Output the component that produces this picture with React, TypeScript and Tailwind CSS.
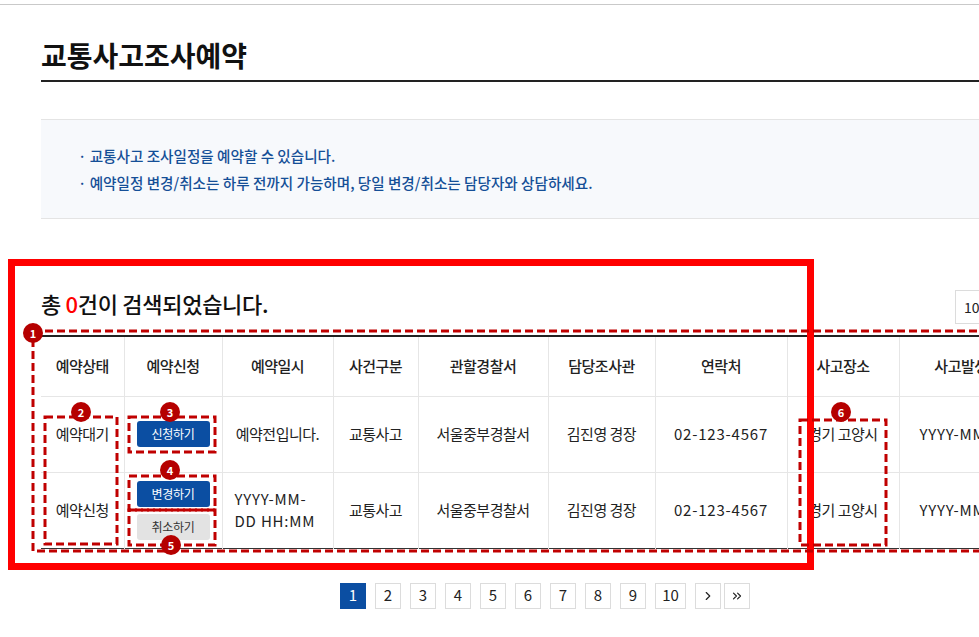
import { ChevronRight, ChevronsRight } from 'lucide-react';

const COLS = [83, 98, 111, 85, 130, 107, 132, 112, 150];
const HEADERS = ['예약상태', '예약신청', '예약일시', '사건구분', '관할경찰서', '담당조사관', '연락처', '사고장소', '사고발생일시'];

function Badge({ n, x, y }: { n: number; x: number; y: number }) {
  return (
    <div
      className="absolute w-[20px] h-[20px] rounded-full bg-[#b50000] text-white text-[11px] font-bold leading-[20px] text-center"
      style={{ left: x - 10, top: y - 10 }}
    >
      {n}
    </div>
  );
}

function DashBox({ x, y, w, h }: { x: number; y: number; w: number; h: number }) {
  return (
    <svg className="absolute pointer-events-none" style={{ left: x - 2, top: y - 2 }} width={w + 4} height={h + 4}>
      <rect x={2} y={2} width={w} height={h} fill="none" stroke="#c00000" strokeWidth={3} strokeDasharray="8 4" />
    </svg>
  );
}

function Btn({ children, gray }: { children: React.ReactNode; gray?: boolean }) {
  return (
    <button
      className={`w-[73px] h-[26px] rounded-[3px] text-[12px] tracking-[-0.3px] leading-[26px] ${
        gray ? 'bg-[#e3e3e3] text-[#333]' : 'bg-[#0b4ea2] text-white'
      }`}
    >
      {children}
    </button>
  );
}

export default function App() {
  const td = 'border-l border-[#e6e6e6] first:border-l-0 text-center text-[15px] tracking-[-0.5px] text-[#222] px-[12px]';
  const num = 'tracking-[0.8px]';
  return (
    <div className="relative w-[979px] h-[637px] overflow-hidden bg-white font-['Noto_Sans_CJK_KR','Noto_Sans',sans-serif]">
      <div className="h-[4px]" />
      <div className="h-px bg-[#c9c9c9]" />

      <div className="pl-[41px]">
        <div className="w-[1008px]">
          <h1 className="pt-[30px] pb-[5px] text-[28px] leading-[40px] font-bold text-[#111] border-b-2 border-[#222]">
            교통사고조사예약
          </h1>

          {/* 안내 */}
          <div className="mt-[37px] bg-[#f7f9fc] border-y border-[#e4e4e4] pl-[37px] py-[22px] text-[14.6px] leading-[27px] text-[#154f97] font-medium">
            <p>· 교통사고 조사일정을 예약할 수 있습니다.</p>
            <p>· 예약일정 변경/취소는 하루 전까지 가능하며, 당일 변경/취소는 담당자와 상담하세요.</p>
          </div>

          <div className="mt-[71px] flex items-start justify-between">
            <p className="text-[22px] leading-[26px] tracking-[-0.3px] text-[#111] font-medium">
              총 <span className="text-[#ff0000]">0</span>건이 검색되었습니다.
            </p>
            <div className="w-[94px] h-[34px] border border-[#dcdcdc] text-[14px] leading-[32px] pl-[8px] text-[#222]">10</div>
          </div>

          <table className="mt-[11px] table-fixed border-collapse w-[1008px] border-t-2 border-t-[#222] border-b border-b-[#333]">
            <colgroup>
              {COLS.map((w, i) => (
                <col key={i} style={{ width: w }} />
              ))}
            </colgroup>
            <thead>
              <tr className="h-[60px] border-b border-[#e6e6e6]">
                {HEADERS.map(h => (
                  <th key={h} className={`${td} font-medium whitespace-nowrap`}>
                    {h}
                  </th>
                ))}
              </tr>
            </thead>
            <tbody>
              <tr className="h-[76px] border-b border-[#e6e6e6]">
                <td className={td}>예약대기</td>
                <td className={td}>
                  <Btn>신청하기</Btn>
                </td>
                <td className={td}>예약전입니다.</td>
                <td className={td}>교통사고</td>
                <td className={td}>서울중부경찰서</td>
                <td className={td}>김진영 경장</td>
                <td className={`${td} ${num}`}>02-123-4567</td>
                <td className={td}>경기 고양시</td>
                <td className={`${td} ${num} text-left !pl-[20px] whitespace-nowrap`}>YYYY-MM-DD</td>
              </tr>
              <tr className="h-[76px]">
                <td className={td}>예약신청</td>
                <td className={td}>
                  <div className="flex flex-col items-center gap-[7px]">
                    <Btn>변경하기</Btn>
                    <Btn gray>취소하기</Btn>
                  </div>
                </td>
                <td className={`${td} ${num}`}>
                  <span className="inline-block text-left leading-[22px]">YYYY-MM-DD HH:MM</span>
                </td>
                <td className={td}>교통사고</td>
                <td className={td}>서울중부경찰서</td>
                <td className={td}>김진영 경장</td>
                <td className={`${td} ${num}`}>02-123-4567</td>
                <td className={td}>경기 고양시</td>
                <td className={`${td} ${num} text-left !pl-[20px] whitespace-nowrap`}>YYYY-MM-DD</td>
              </tr>
            </tbody>
          </table>

          <div className="mt-[34px] flex justify-center items-center text-[15px] text-[#222]">
            <div className="flex gap-[9px]">
              {[1, 2, 3, 4, 5, 6, 7, 8, 9, 10].map(n => (
                <span
                  key={n}
                  className={`h-[26px] flex items-center justify-center ${n === 10 ? 'w-[31px]' : 'w-[26px]'} ${
                    n === 1 ? 'bg-[#0b4ea2] text-white' : 'border border-[#dcdcdc]'
                  }`}
                >
                  {n}
                </span>
              ))}
            </div>
            <div className="flex gap-[3px] ml-[9px]">
              <span className="w-[26px] h-[26px] border border-[#dcdcdc] flex items-center justify-center text-[#222]">
                <ChevronRight size={14} strokeWidth={2} />
              </span>
              <span className="w-[26px] h-[26px] border border-[#dcdcdc] flex items-center justify-center text-[#222]">
                <ChevronsRight size={14} strokeWidth={2} />
              </span>
            </div>
          </div>
        </div>
      </div>

      {/* annotations */}
      <div className="absolute left-[8px] top-[259px] w-[806px] h-[311px] border-[7px] border-[#ff0000] pointer-events-none" />
      <DashBox x={33} y={331} w={1000} h={220} />
      <DashBox x={45} y={417} w={72} h={127} />
      <DashBox x={129} y={417} w={86} h={35} />
      <DashBox x={129} y={476} w={86} h={34} />
      <DashBox x={129} y={510} w={86} h={35} />
      <DashBox x={800} y={420} w={86} h={125} />
      <Badge n={1} x={33} y={333} />
      <Badge n={2} x={81} y={412} />
      <Badge n={3} x={170} y={412} />
      <Badge n={4} x={170} y={470} />
      <Badge n={5} x={171} y={545} />
      <Badge n={6} x={841} y={412} />
    </div>
  );
}
